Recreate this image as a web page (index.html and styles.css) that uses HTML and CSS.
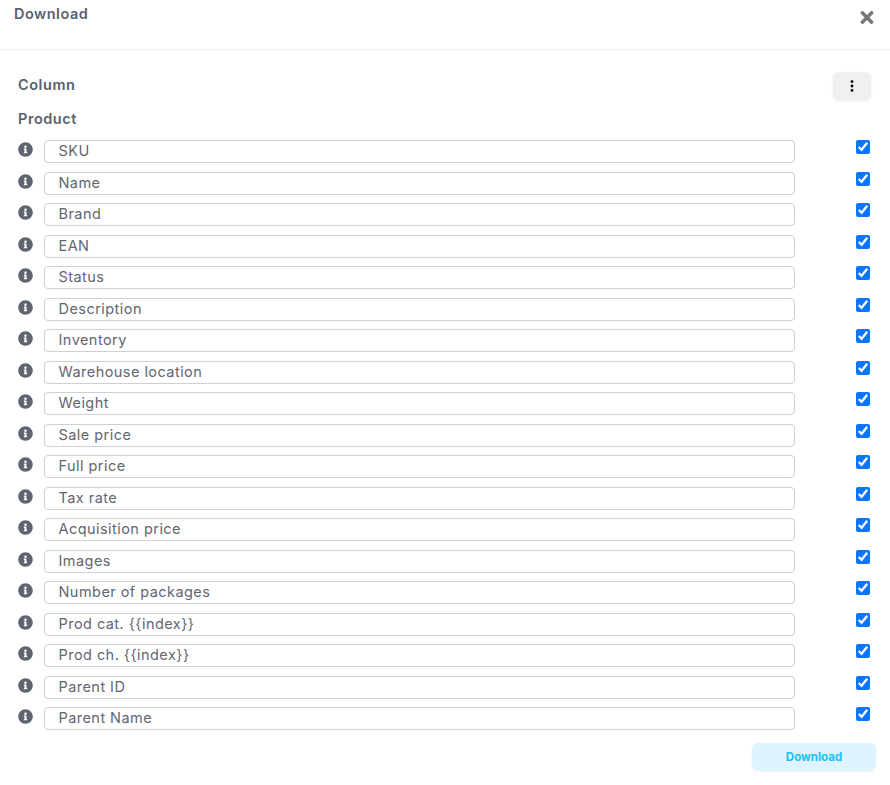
FILE: index.html
```html
<!DOCTYPE html>
<html lang="en">
<head>
    <meta charset="UTF-8">
    <title>Download</title>
    <link rel="stylesheet" href="styles.css">
</head>
<body>
    <svg class="defs" width="0" height="0">
        <symbol id="info" viewBox="0 0 512 512">
            <path d="M256 8C119.043 8 8 119.083 8 256c0 136.997 111.043 248 248 248s248-111.003 248-248C504 119.083 392.957 8 256 8zm0 110c23.196 0 42 18.804 42 42s-18.804 42-42 42-42-18.804-42-42 18.804-42 42-42zm56 254c0 6.627-5.373 12-12 12h-88c-6.627 0-12-5.373-12-12v-24c0-6.627 5.373-12 12-12h12v-64h-12c-6.627 0-12-5.373-12-12v-24c0-6.627 5.373-12 12-12h64c6.627 0 12 5.373 12 12v100h12c6.627 0 12 5.373 12 12v24z"/>
        </symbol>
    </svg>
    <div class="modal">
        <div class="modal-header">
            <h1>Download</h1>
            <svg class="close" viewBox="0 0 352 512"><path d="M242.72 256l100.07-100.07c12.28-12.28 12.28-32.19 0-44.48l-22.24-22.24c-12.28-12.28-32.19-12.28-44.48 0L176 189.28 75.93 89.21c-12.28-12.28-32.19-12.28-44.48 0L9.21 111.45c-12.28 12.28-12.28 32.19 0 44.48L109.28 256 9.21 356.07c-12.28 12.28-12.28 32.19 0 44.48l22.24 22.24c12.28 12.28 32.2 12.28 44.48 0L176 322.72l100.07 100.07c12.28 12.28 32.2 12.28 44.48 0l22.24-22.24c12.28-12.28 12.28-32.19 0-44.48L242.72 256z"/></svg>
        </div>
        <div class="modal-body">
            <div class="column-head">
                <h2>Column</h2>
                <button class="menu-btn" type="button">
                    <svg width="4" height="12" viewBox="0 0 4 12"><circle cx="2" cy="1.6" r="1.4"/><circle cx="2" cy="6" r="1.4"/><circle cx="2" cy="10.4" r="1.4"/></svg>
                </button>
            </div>
            <h2 class="group-title">Product</h2>
            <div class="rows" id="rows">
                <div class="row"><svg class="info"><use href="#info"/></svg><div class="field">SKU</div><input type="checkbox" checked></div>
                <div class="row"><svg class="info"><use href="#info"/></svg><div class="field">Name</div><input type="checkbox" checked></div>
                <div class="row"><svg class="info"><use href="#info"/></svg><div class="field">Brand</div><input type="checkbox" checked></div>
                <div class="row"><svg class="info"><use href="#info"/></svg><div class="field">EAN</div><input type="checkbox" checked></div>
                <div class="row"><svg class="info"><use href="#info"/></svg><div class="field">Status</div><input type="checkbox" checked></div>
                <div class="row"><svg class="info"><use href="#info"/></svg><div class="field">Description</div><input type="checkbox" checked></div>
                <div class="row"><svg class="info"><use href="#info"/></svg><div class="field">Inventory</div><input type="checkbox" checked></div>
                <div class="row"><svg class="info"><use href="#info"/></svg><div class="field">Warehouse location</div><input type="checkbox" checked></div>
                <div class="row"><svg class="info"><use href="#info"/></svg><div class="field">Weight</div><input type="checkbox" checked></div>
                <div class="row"><svg class="info"><use href="#info"/></svg><div class="field">Sale price</div><input type="checkbox" checked></div>
                <div class="row"><svg class="info"><use href="#info"/></svg><div class="field">Full price</div><input type="checkbox" checked></div>
                <div class="row"><svg class="info"><use href="#info"/></svg><div class="field">Tax rate</div><input type="checkbox" checked></div>
                <div class="row"><svg class="info"><use href="#info"/></svg><div class="field">Acquisition price</div><input type="checkbox" checked></div>
                <div class="row"><svg class="info"><use href="#info"/></svg><div class="field">Images</div><input type="checkbox" checked></div>
                <div class="row"><svg class="info"><use href="#info"/></svg><div class="field">Number of packages</div><input type="checkbox" checked></div>
                <div class="row"><svg class="info"><use href="#info"/></svg><div class="field">Prod cat. {{index}}</div><input type="checkbox" checked></div>
                <div class="row"><svg class="info"><use href="#info"/></svg><div class="field">Prod ch. {{index}}</div><input type="checkbox" checked></div>
                <div class="row"><svg class="info"><use href="#info"/></svg><div class="field">Parent ID</div><input type="checkbox" checked></div>
                <div class="row"><svg class="info"><use href="#info"/></svg><div class="field">Parent Name</div><input type="checkbox" checked></div>
            </div>
        </div>
        <div class="modal-footer">
            <button class="download-btn" type="button">Download</button>
        </div>
    </div>
</body>
</html>
```

FILE: styles.css
```css
body {
    margin: 0;
    background: #fff;
    font-family: Inter, "Open Sans", "Liberation Sans", sans-serif;
    color: #5e6278;
}
.defs {
    display: block;
    height: 0;
}
.modal {
    width: 890px;
    height: 785px;
    overflow: hidden;
}
.modal-header {
    display: flex;
    justify-content: space-between;
    height: 49px;
    padding: 0 16px 0 14px;
    border-bottom: 1px solid #ebedf0;
}
h1 {
    margin: 5px 0 0;
    font-size: 14.5px;
    line-height: 18px;
    font-weight: 600;
    letter-spacing: 0.5px;
    color: #5a5f6b;
}
.close {
    width: 14px;
    height: 19px;
    margin-top: 8px;
    fill: #777;
}
.modal-body {
    padding: 22px 19px 0 18px;
}
.column-head {
    display: flex;
    justify-content: space-between;
    align-items: flex-start;
    height: 37px;
}
h2 {
    margin: 0;
    font-size: 14.5px;
    line-height: 26px;
    font-weight: 600;
    letter-spacing: 0.55px;
    color: #5a5f6b;
}
.menu-btn {
    display: flex;
    align-items: center;
    justify-content: center;
    width: 38px;
    height: 28px;
    border: none;
    border-radius: 6px;
    background: #f0f0f0;
    box-shadow: 0 1px 3px rgba(0, 0, 0, 0.08);
}
.group-title {
    height: 31px;
    line-height: 20px;
    margin-top: 0;
}
.row {
    display: flex;
    align-items: flex-start;
    height: 31.5px;
}
.info {
    flex: none;
    width: 15px;
    height: 15px;
    margin: 2px 11px 0 0;
    fill: #5e6470;
}
.field {
    box-sizing: border-box;
    width: 751px;
    height: 23px;
    padding-left: 13.5px;
    border: 1px solid #ccd1d9;
    border-radius: 4px;
    font-size: 14.5px;
    line-height: 19px;
    letter-spacing: 0.45px;
    color: #62666f;
}
.row input {
    width: 14px;
    height: 14px;
    margin: 0 0 0 61px;
    accent-color: #0b76fb;
}
.modal-footer {
    display: flex;
    justify-content: flex-end;
    padding: 4.5px 14px 0 0;
}
.download-btn {
    width: 124px;
    height: 28px;
    border: none;
    border-radius: 6px;
    background: #def5ff;
    color: #1cc0fb;
    font-family: inherit;
    font-size: 11.5px;
    font-weight: 700;
    box-shadow: 0 1px 3px rgba(0, 0, 0, 0.06);
}
```
